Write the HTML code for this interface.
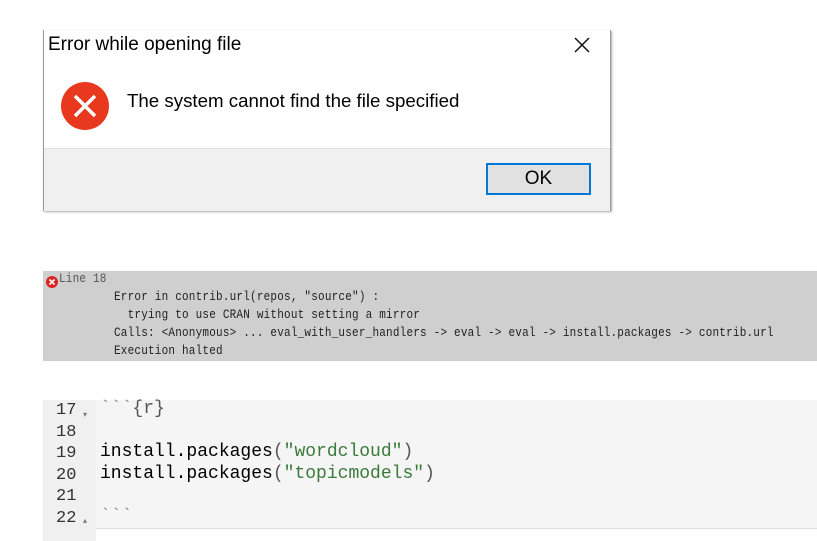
<!DOCTYPE html><html><head><style>
body{margin:0;width:817px;height:541px;background:#fff;position:relative;overflow:hidden;font-family:"Liberation Sans",sans-serif}
.a{position:absolute}
.m{font-family:"Liberation Mono",monospace}
</style></head><body>
<div class="a" style="left:43px;top:30px;width:566px;height:180px;border:1px solid #9a9a9a;border-top:none;background:#fff;box-shadow:1px 1px 2px #aaa"></div>
<div class="a" style="left:44px;top:148px;width:566px;height:62px;background:#f0f0f0;border-top:1px solid #e0e0e0"></div>
<div class="a" style="left:48px;top:34px;font-size:19px;color:#000">Error while opening file</div>
<svg class="a" style="left:572px;top:35px" width="20" height="20"><path d="M3 3L17 17M17 3L3 17" stroke="#111" stroke-width="1.5"/></svg>
<svg class="a" style="left:60px;top:81px" width="50" height="50"><circle cx="25" cy="25" r="24" fill="#e8391f"/><path d="M15 15L35 35M35 15L15 35" stroke="#fff" stroke-width="3.5"/></svg>
<div class="a" style="left:127px;top:90px;font-size:18.7px;color:#000">The system cannot find the file specified</div>
<div class="a" style="left:486px;top:163px;width:101px;height:28px;border:2px solid #0078d7;background:#e1e1e1;text-align:center;line-height:28px;font-size:19px">OK</div>
<div class="a m" style="left:43px;top:271px;width:774px;height:90px;background:#cfcfcf;font-size:11px;color:#222">
<svg class="a" style="left:3px;top:5px" width="12" height="12"><circle cx="6" cy="6" r="6" fill="#d22"/><path d="M3.5 3.5L8.5 8.5M8.5 3.5L3.5 8.5" stroke="#fff" stroke-width="1.6"/></svg>
<div class="a" style="left:16px;top:0;color:#555;line-height:15px;transform:scaleY(1.2);transform-origin:0 0;letter-spacing:0.2px">Line 18</div>
<div class="a" style="left:71px;top:18px;white-space:pre;line-height:15px;transform:scaleY(1.2);transform-origin:0 0;letter-spacing:0.2px">Error in contrib.url(repos, "source") :
  trying to use CRAN without setting a mirror
Calls: &lt;Anonymous&gt; ... eval_with_user_handlers -&gt; eval -&gt; eval -&gt; install.packages -&gt; contrib.url
Execution halted</div></div>
<div class="a" style="left:43px;top:400px;width:53px;height:141px;background:#f0f0f0"></div>
<div class="a" style="left:96px;top:400px;width:721px;height:128px;background:#f5f5f5;border-bottom:1px solid #ddd"></div>
<div class="a m" style="left:56px;top:400px;font-size:17px;line-height:21.5px;color:#333;white-space:pre">17
18
19
20
21
22</div>
<div class="a" style="left:83px;top:410px;font-size:8px;color:#777">▾</div>
<div class="a" style="left:83px;top:516px;font-size:8px;color:#777">▴</div>
<div class="a m" style="left:100px;top:399px;font-size:18px;line-height:21.5px;color:#000;white-space:pre"><span style="color:#888">&#96;&#96;&#96;</span><span style="color:#555">{r}</span>

install.packages<span style="color:#555">(</span><span style="color:#3a7a3a">"wordcloud"</span><span style="color:#555">)</span>
install.packages<span style="color:#555">(</span><span style="color:#3a7a3a">"topicmodels"</span><span style="color:#555">)</span>

<span style="color:#888">&#96;&#96;&#96;</span></div>
</body></html>
